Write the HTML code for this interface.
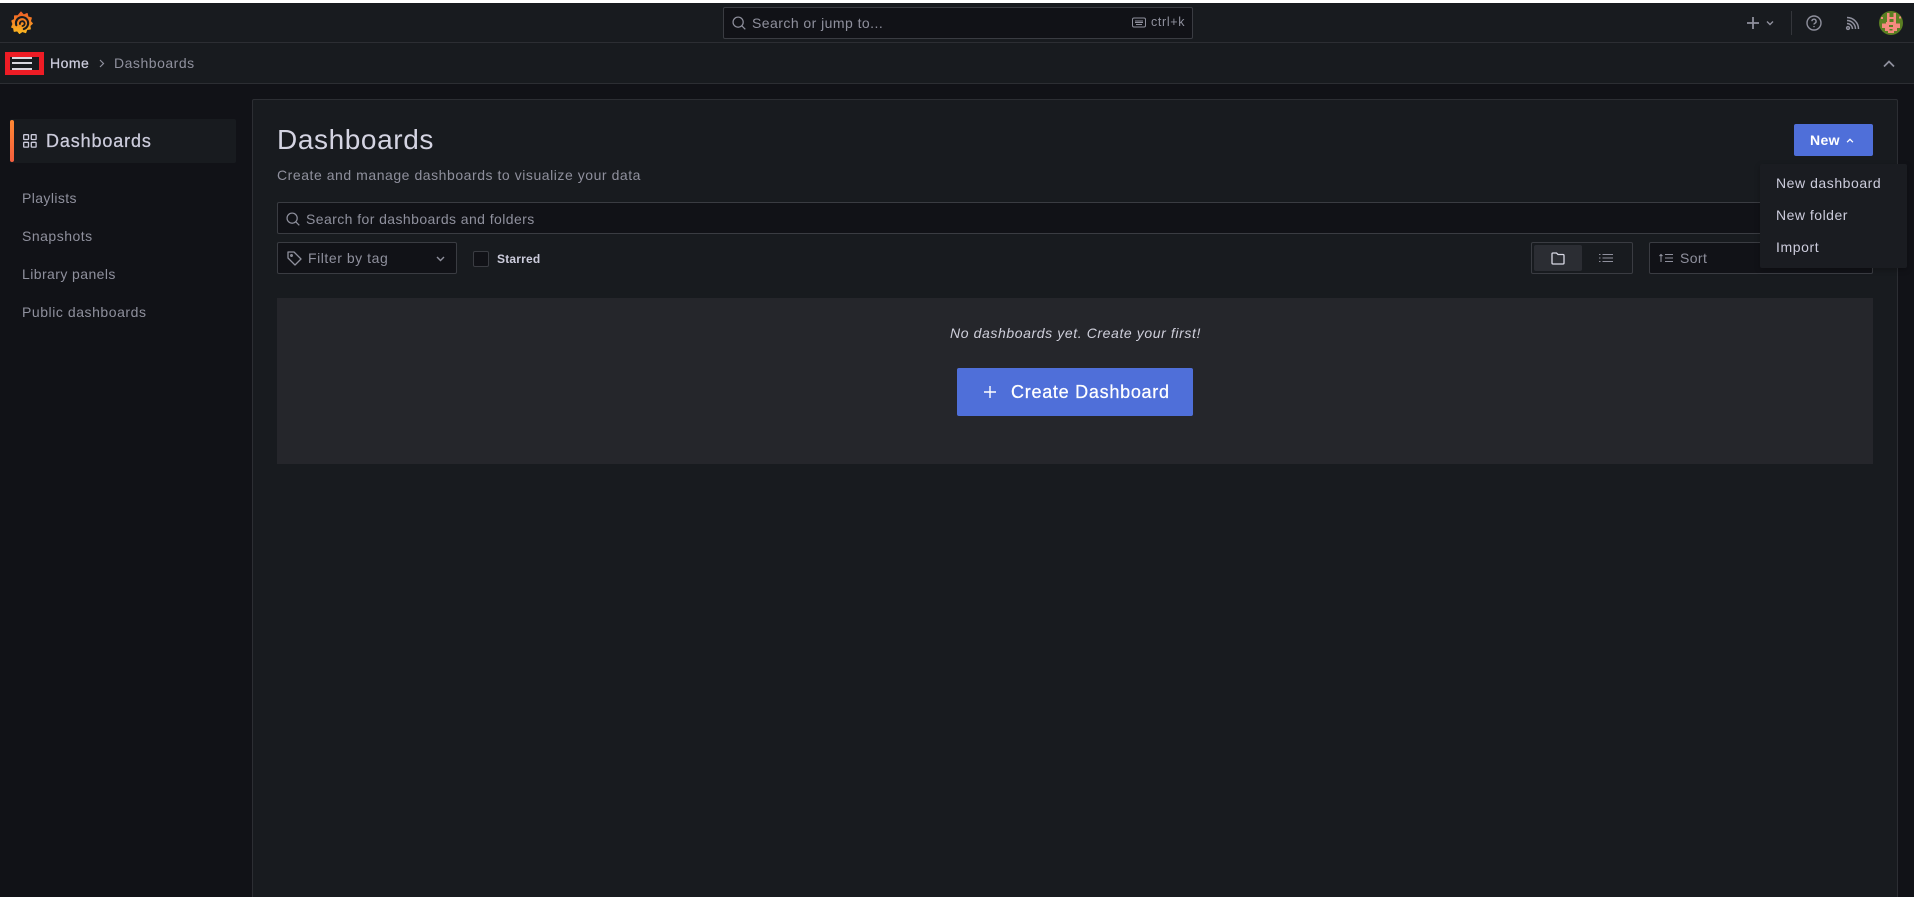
<!DOCTYPE html>
<html><head><meta charset="utf-8"><title>Dashboards</title>
<style>
*{box-sizing:border-box}
html,body{margin:0;padding:0;width:1914px;height:897px;overflow:hidden;background:#111217;font-family:"Liberation Sans",sans-serif;color:#ccccdc}
#root{position:relative;width:1914px;height:897px;overflow:hidden}
.a{position:absolute}
.t{position:absolute;white-space:nowrap;font-size:14px;line-height:20px;letter-spacing:.5px}
.sec{color:#8f909d}
.m{-webkit-text-stroke:.25px currentColor}
.input{position:absolute;background:#111217;border:1px solid #3a3c42;border-radius:2px}
svg{position:absolute;overflow:visible}
</style></head>
<body>
<div id="root">
<div class="a" style="left:0;top:0;width:1914px;height:3px;background:#fff"></div>
<div class="a" style="left:0;top:3px;width:1914px;height:40px;background:#181b1f;border-bottom:1px solid #2c2e33"></div>
<div class="a" style="left:0;top:43px;width:1914px;height:41px;background:#181b1f;border-bottom:1px solid #2c2e33"></div>

<svg style="left:11px;top:11px" width="22" height="24" viewBox="0 0 22 24">
<defs><linearGradient id="g" gradientUnits="userSpaceOnUse" x1="0" y1="24" x2="0" y2="0"><stop offset="0" stop-color="#fbc01f"/><stop offset=".5" stop-color="#f58a24"/><stop offset="1" stop-color="#ee5a26"/></linearGradient></defs>
<path fill="url(#g)" stroke="url(#g)" stroke-width="1" stroke-linejoin="round" d="M10 1l2.600 3 3.600-1.500.8 3.500 3.400.8-1 3.400 2 2.300-2.500 2.300.5 3.200-3.500.5-1.200 3.200-3.300-1.200-2.900 2-2.100-2.600-3.200.5-.6-3.300L.6 16.200l1.300-3.100L.8 9.800l2.700-1.500V4.900l3.500-.3z"/>
<path fill="none" stroke="#181b1f" stroke-width="2.100" stroke-linecap="round" d="M5.300 14.200A6.100 6.100 0 1 1 12.800 18"/>
<path fill="none" stroke="#181b1f" stroke-width="1.800" stroke-linecap="round" d="M8.900 13a2.400 2.400 0 1 1 2.600 2"/>
</svg>

<div class="input" style="left:723px;top:7px;width:470px;height:32px"></div>
<svg style="left:732px;top:16px" width="14" height="14" viewBox="0 0 16 16" fill="none" stroke="#8f909d" stroke-width="1.400"><circle cx="7" cy="7" r="5.800"/><path d="M11.200 11.200l4 4"/></svg>
<div class="t sec" style="left:752px;top:13px;letter-spacing:.45px">Search or jump to...</div>
<svg style="left:1132px;top:17px" width="14" height="11" viewBox="0 0 14 11" fill="none" stroke="#8f909d"><rect x=".5" y="1" width="13" height="9" rx="1.500"/><path d="M3 4h8M3 5.500h8M4 7.500h6"/></svg>
<div class="t sec" style="left:1151px;top:12px;font-size:12.500px;letter-spacing:.65px">ctrl+k</div>

<svg style="left:1746px;top:16px" width="30" height="14" viewBox="0 0 30 14" fill="none" stroke="#8f909d"><path stroke-width="1.800" d="M7 1v12M1 7h12"/><path stroke-width="1.400" d="M21 5.500l3 3 3-3"/></svg>
<div class="a" style="left:1791px;top:11px;width:1px;height:24px;background:#34363b"></div>
<svg style="left:1806px;top:15px" width="16" height="16" viewBox="0 0 16 16" fill="none" stroke="#8f909d" stroke-width="1.400"><circle cx="8" cy="8" r="7"/><path d="M5.900 6.200a2.100 2.100 0 1 1 3 2c-.6.300-.9.700-.9 1.300"/><path d="M8 11v1.200"/></svg>
<svg style="left:1846px;top:16px" width="14" height="14" viewBox="0 0 14 14" fill="none" stroke="#8f909d" stroke-width="1.500"><circle cx="2" cy="12" r="1.400"/><path d="M1 7.500a5.500 5.500 0 0 1 5.500 5.500M1 4.500a8.500 8.500 0 0 1 8.500 8.500M1 1.500A11.500 11.500 0 0 1 12.500 13"/></svg>
<svg style="left:1879px;top:11px" width="24" height="24" viewBox="0 0 24 24">
<circle cx="12" cy="12" r="12" fill="#5a7f22"/>
<path fill="#f58b7f" d="M8 2h2.500v4h4V2H17v9h-2.500V8h-4v3H8zM7 11h10v1.500h4V17h-3v3h-3v2H9v-2H6v-3H3v-4.500h4zM2 6h2v2H2zM20 5.500h2v2h-2z"/>
<path fill="#5a7f22" d="M10 14h4v2h-4zM10.500 18h3v1.500h-3z"/>
</svg>

<div class="a" style="left:5px;top:52px;width:39px;height:23px;border:5px solid #ee1c25;background:#181b1f"></div>
<div class="a" style="left:12px;top:57px;width:20px;height:2px;background:#d8d8e0"></div>
<div class="a" style="left:12px;top:62px;width:20px;height:2px;background:#d8d8e0"></div>
<div class="a" style="left:12px;top:68px;width:20px;height:2px;background:#d8d8e0"></div>
<div class="t m" style="left:50px;top:53px;color:#ccccdc;letter-spacing:.5px">Home</div>
<svg style="left:99px;top:59px" width="6" height="9" viewBox="0 0 6 9" fill="none" stroke="#8f909d" stroke-width="1.200"><path d="M1 1l3.500 3.500L1 8"/></svg>
<div class="t sec" style="left:114px;top:53px;letter-spacing:.52px">Dashboards</div>
<svg style="left:1883px;top:60px" width="12" height="8" viewBox="0 0 12 8" fill="none" stroke="#8f909d" stroke-width="1.700"><path d="M1 6.500l5-5 5 5"/></svg>

<div class="a" style="left:10px;top:119px;width:226px;height:44px;background:#181b1f;border-radius:2px"></div>
<div class="a" style="left:10px;top:120px;width:4px;height:42px;border-radius:2px;background:linear-gradient(#ff8833,#f55f3e)"></div>
<svg style="left:23px;top:134px" width="14" height="14" viewBox="0 0 14 14" fill="none" stroke="#ccccdc" stroke-width="1.300"><rect x=".7" y=".7" width="4.800" height="4.800" rx=".6"/><rect x="8.300" y=".7" width="4.800" height="4.800" rx=".6"/><rect x=".7" y="8.300" width="4.800" height="4.800" rx=".6"/><rect x="8.300" y="8.300" width="4.800" height="4.800" rx=".6"/></svg>
<div class="t m" style="left:46px;top:130px;font-size:18px;line-height:22px;letter-spacing:.87px">Dashboards</div>
<div class="t sec" style="left:22px;top:188px;letter-spacing:.4px">Playlists</div>
<div class="t sec" style="left:22px;top:226px">Snapshots</div>
<div class="t sec" style="left:22px;top:264px;letter-spacing:.42px">Library panels</div>
<div class="t sec" style="left:22px;top:302px;letter-spacing:.55px">Public dashboards</div>

<div class="a" style="left:252px;top:99px;width:1646px;height:810px;background:#181b1f;border:1px solid #2c2e33;border-radius:2px"></div>
<div class="t" style="left:277px;top:122px;font-size:28px;line-height:36px;letter-spacing:.6px;color:#d4d4e2">Dashboards</div>
<div class="t sec" style="left:277px;top:165px;letter-spacing:.545px">Create and manage dashboards to visualize your data</div>

<div class="a" style="left:1794px;top:124px;width:79px;height:32px;background:#4f6fd9;border-radius:2px"></div>
<div class="t" style="left:1810px;top:130px;color:#fff;font-weight:700;letter-spacing:.35px">New</div>
<svg style="left:1846px;top:138px" width="8" height="5" viewBox="0 0 9 6" fill="none" stroke="#fff" stroke-width="1.500"><path d="M1 5l3.500-3.500L8 5"/></svg>

<div class="input" style="left:277px;top:202px;width:1596px;height:32px"></div>
<svg style="left:286px;top:212px" width="14" height="14" viewBox="0 0 16 16" fill="none" stroke="#8f909d" stroke-width="1.400"><circle cx="7" cy="7" r="5.800"/><path d="M11.200 11.200l4 4"/></svg>
<div class="t sec" style="left:306px;top:209px;letter-spacing:.42px">Search for dashboards and folders</div>

<div class="input" style="left:277px;top:242px;width:180px;height:32px"></div>
<svg style="left:287px;top:251px" width="15" height="15" viewBox="0 0 15 15" fill="none" stroke="#8f909d" stroke-width="1.300"><path d="M1 1h6l7 7-6 6-7-7z" stroke-linejoin="round"/><circle cx="4.500" cy="4.500" r=".8"/></svg>
<div class="t sec" style="left:308px;top:248px;letter-spacing:.55px">Filter by tag</div>
<svg style="left:436px;top:256px" width="9" height="6" viewBox="0 0 9 6" fill="none" stroke="#8f909d" stroke-width="1.400"><path d="M1 1l3.500 3.500L8 1"/></svg>

<div class="a" style="left:473px;top:251px;width:16px;height:16px;background:#111217;border:1px solid #3a3c42;border-radius:2px"></div>
<div class="t" style="left:497px;top:249px;font-size:12px;font-weight:700;letter-spacing:.2px">Starred</div>

<div class="a" style="left:1531px;top:242px;width:102px;height:32px;border:1px solid #3a3c42;border-radius:2px"></div>
<div class="a" style="left:1534px;top:245px;width:48px;height:26px;background:#2b2d33;border-radius:2px"></div>
<svg style="left:1551px;top:251px" width="14" height="14" viewBox="0 0 14 14" fill="none" stroke="#d8d8e4" stroke-width="1.300"><path d="M1 3a1 1 0 0 1 1-1h3.500l1.500 1.500h5a1 1 0 0 1 1 1V12a1 1 0 0 1-1 1H2a1 1 0 0 1-1-1z"/></svg>
<svg style="left:1599px;top:254px" width="14" height="8" viewBox="0 0 14 8" fill="none" stroke="#8f909d" stroke-width="1.100"><path d="M3.500 .5H14M3.500 4H14M3.500 7.500H14M0 .5h1.500M0 4h1.500M0 7.500h1.500"/></svg>

<div class="input" style="left:1649px;top:242px;width:224px;height:32px"></div>
<svg style="left:1659px;top:254px" width="14" height="8" viewBox="0 0 14 8" fill="none" stroke="#8f909d" stroke-width="1.100"><path d="M2 8V.5M.5 2L2 .5 3.500 2M6 .5h8M6 4h8M6 7.500h8"/></svg>
<div class="t sec" style="left:1680px;top:248px;letter-spacing:.4px">Sort</div>

<div class="a" style="left:1760px;top:164px;width:147px;height:104px;background:#1a1c21;border-radius:2px;box-shadow:0 2px 6px rgba(0,0,0,.25)"></div>
<div class="t" style="left:1776px;top:173px;letter-spacing:.55px">New dashboard</div>
<div class="t" style="left:1776px;top:205px;letter-spacing:.5px">New folder</div>
<div class="t" style="left:1776px;top:237px;letter-spacing:.6px">Import</div>

<div class="a" style="left:277px;top:298px;width:1596px;height:166px;background:#25262b"></div>
<div class="t" style="left:950px;top:323px;font-style:italic;letter-spacing:.6px;color:#cfcfdb">No dashboards yet. Create your first!</div>
<div class="a" style="left:957px;top:368px;width:236px;height:48px;background:#4f6fd9;border-radius:2px"></div>
<svg style="left:984px;top:386px" width="12" height="12" viewBox="0 0 12 12" fill="none" stroke="#fff" stroke-width="1.400"><path d="M6 0v12M0 6h12"/></svg>
<div class="t m" style="left:1011px;top:381px;font-size:18px;line-height:22px;letter-spacing:.73px;color:#fff">Create Dashboard</div>
</div>
</body></html>
